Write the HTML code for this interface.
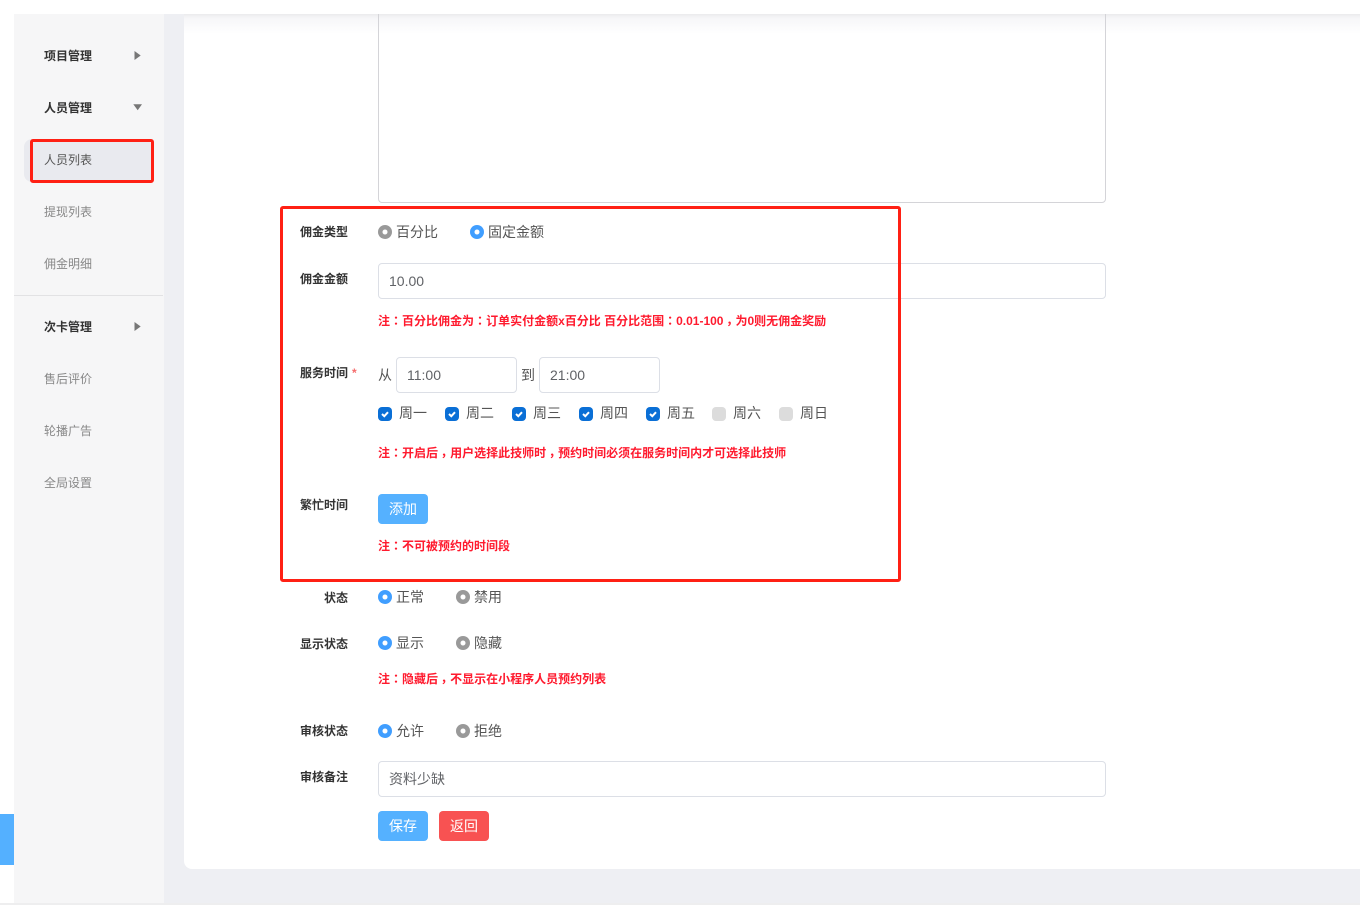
<!DOCTYPE html>
<html lang="zh-CN"><head><meta charset="utf-8"><title>人员列表</title>
<style>
html,body{margin:0;padding:0;width:1360px;height:905px;overflow:hidden;background:#fff}
body{position:relative;font-family:"Liberation Sans","Noto Sans CJK SC",sans-serif;font-size:14px;color:#444}
div,span{position:absolute;box-sizing:border-box;white-space:nowrap}
.m{font-size:12px;line-height:16px;font-weight:700;color:#333;left:44px}
.s{font-size:12px;line-height:16px;color:#888;left:44px}
.l{font-size:12px;line-height:16px;font-weight:700;color:#333;width:80px;text-align:right;left:268px}
.n{font-size:12px;line-height:16px;font-weight:700;color:#ff1a2e;left:378px}
.n span{position:static;font-family:"Noto Sans CJK TC",sans-serif}
.n span.q{position:relative;top:3px}
.t{font-size:14px;line-height:20px;color:#555}
.r{width:14px;height:14px;border-radius:50%;background:radial-gradient(circle,#fff 2.2px,#409eff 2.8px)}
.g{background:radial-gradient(circle,#fff 2.2px,#999 2.8px)}
.i{height:36px;border:1px solid #dcdfe6;border-radius:4px;background:#fff;font-size:14px;line-height:34px;color:#606266;padding-left:10px}
.c{width:14px;height:14px;border-radius:4px;background:#0a6fd6}
.c svg{position:absolute;left:0;top:0}
.d{width:14px;height:14px;border-radius:4px;background:#dcdcdc}
.b{width:50px;height:30px;border-radius:4px;background:#55b1ff;color:#fff;text-align:center;line-height:30px;font-size:14px}
.box{border:3px solid #ff2014;border-radius:3px}
</style></head><body>
<div style="left:14px;top:14px;width:1346px;height:889px;background:#eeeff3"></div>
<div style="left:14px;top:14px;width:150px;height:889px;background:#f6f6f7"></div>
<div style="left:184px;top:14px;width:1176px;height:855px;background:#fff;border-radius:0 0 0 8px"></div>
<div style="left:184px;top:14px;width:1176px;height:20px;background:linear-gradient(#ebebed 0,#f6f6f8 4px,#ffffff 20px)"></div>
<div style="left:0;top:814px;width:14px;height:51px;background:#54b0ff"></div>
<div style="left:0;top:903px;width:1360px;height:2px;background:#eeeeef"></div>

<div class="m" style="top:48px">项目管理</div>
<svg style="position:absolute;left:134px;top:50px" width="8" height="11"><path d="M0.5 1L6.7 5.5L0.5 10Z" fill="#777"/></svg>
<div class="m" style="top:100px">人员管理</div>
<svg style="position:absolute;left:133px;top:104px" width="10" height="7"><path d="M0.3 0.3H9L4.7 6.3Z" fill="#777"/></svg>
<div style="left:24px;top:139px;width:128px;height:43px;background:#e9eaef;border-radius:8px 0 0 8px"></div>
<div class="box" style="left:30px;top:139px;width:124px;height:44px"></div>
<div class="s" style="top:152px;color:#555">人员列表</div>
<div class="s" style="top:204px">提现列表</div>
<div class="s" style="top:256px">佣金明细</div>
<div style="left:14px;top:295px;width:149px;height:1px;background:#e2e2e4"></div>
<div class="m" style="top:319px">次卡管理</div>
<svg style="position:absolute;left:134px;top:321px" width="8" height="11"><path d="M0.5 1L6.7 5.5L0.5 10Z" fill="#777"/></svg>
<div class="s" style="top:371px">售后评价</div>
<div class="s" style="top:423px">轮播广告</div>
<div class="s" style="top:475px">全局设置</div>

<div style="left:378px;top:0;width:728px;height:203px;border:1px solid #d4d4d8;border-radius:4px;background:transparent"></div>
<div style="left:0;top:0;width:1360px;height:14px;background:#fff"></div>

<div class="l" style="top:224px">佣金类型</div>
<div class="r g" style="left:378px;top:225px"></div><div class="t" style="left:396px;top:222px">百分比</div>
<div class="r" style="left:470px;top:225px"></div><div class="t" style="left:488px;top:222px">固定金额</div>

<div class="l" style="top:271px">佣金金额</div>
<div class="i" style="left:378px;top:263px;width:728px">10.00</div>
<div class="n" style="top:313px">注<span lang="zh-TW">：</span>百分比佣金为<span lang="zh-TW">：</span>订单实付金额x百分比 百分比范围<span lang="zh-TW">：</span>0.01-100<span class="q" lang="zh-TW">，</span>为0则无佣金奖励</div>

<div class="l" style="top:365px">服务时间</div>
<div style="left:352px;top:365px;font-size:12px;line-height:16px;font-weight:700;color:#f56c6c">*</div>
<div class="t" style="left:378px;top:365px">从</div>
<div class="i" style="left:396px;top:357px;width:121px">11:00</div>
<div class="t" style="left:521px;top:365px">到</div>
<div class="i" style="left:539px;top:357px;width:121px">21:00</div>

<div class="c" style="left:378px;top:407px"><svg width="14" height="14"><path d="M4 7L6.3 9.2L10 5.2" fill="none" stroke="#fff" stroke-width="2"/></svg></div><div class="t" style="left:399px;top:403px">周一</div>
<div class="c" style="left:445px;top:407px"><svg width="14" height="14"><path d="M4 7L6.3 9.2L10 5.2" fill="none" stroke="#fff" stroke-width="2"/></svg></div><div class="t" style="left:466px;top:403px">周二</div>
<div class="c" style="left:512px;top:407px"><svg width="14" height="14"><path d="M4 7L6.3 9.2L10 5.2" fill="none" stroke="#fff" stroke-width="2"/></svg></div><div class="t" style="left:533px;top:403px">周三</div>
<div class="c" style="left:579px;top:407px"><svg width="14" height="14"><path d="M4 7L6.3 9.2L10 5.2" fill="none" stroke="#fff" stroke-width="2"/></svg></div><div class="t" style="left:600px;top:403px">周四</div>
<div class="c" style="left:646px;top:407px"><svg width="14" height="14"><path d="M4 7L6.3 9.2L10 5.2" fill="none" stroke="#fff" stroke-width="2"/></svg></div><div class="t" style="left:667px;top:403px">周五</div>
<div class="d" style="left:712px;top:407px"></div><div class="t" style="left:733px;top:403px">周六</div>
<div class="d" style="left:779px;top:407px"></div><div class="t" style="left:800px;top:403px">周日</div>
<div class="n" style="top:445px">注<span lang="zh-TW">：</span>开启后<span class="q" lang="zh-TW">，</span>用户选择此技师时<span class="q" lang="zh-TW">，</span>预约时间必须在服务时间内才可选择此技师</div>

<div class="l" style="top:497px">繁忙时间</div>
<div class="b" style="left:378px;top:494px">添加</div>
<div class="n" style="top:538px">注<span lang="zh-TW">：</span>不可被预约的时间段</div>

<div class="box" style="left:280px;top:206px;width:621px;height:376px"></div>

<div class="l" style="top:590px">状态</div>
<div class="r" style="left:378px;top:590px"></div><div class="t" style="left:396px;top:587px">正常</div>
<div class="r g" style="left:456px;top:590px"></div><div class="t" style="left:474px;top:587px">禁用</div>

<div class="l" style="top:636px">显示状态</div>
<div class="r" style="left:378px;top:636px"></div><div class="t" style="left:396px;top:633px">显示</div>
<div class="r g" style="left:456px;top:636px"></div><div class="t" style="left:474px;top:633px">隐藏</div>
<div class="n" style="top:671px">注<span lang="zh-TW">：</span>隐藏后<span class="q" lang="zh-TW">，</span>不显示在小程序人员预约列表</div>

<div class="l" style="top:723px">审核状态</div>
<div class="r" style="left:378px;top:724px"></div><div class="t" style="left:396px;top:721px">允许</div>
<div class="r g" style="left:456px;top:724px"></div><div class="t" style="left:474px;top:721px">拒绝</div>

<div class="l" style="top:769px">审核备注</div>
<div class="i" style="left:378px;top:761px;width:728px">资料少缺</div>
<div class="b" style="left:378px;top:811px">保存</div>
<div class="b" style="left:439px;top:811px;background:#f85252">返回</div>
</body></html>
